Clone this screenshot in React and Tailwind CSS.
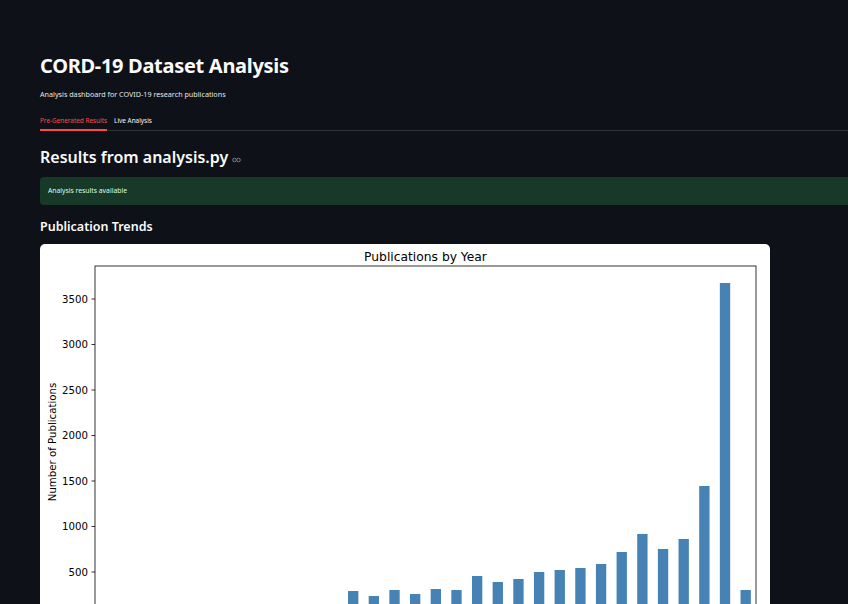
import React from 'react';

// yearly counts, index 0..31 (first 12 are tiny and fall below the fold)
const counts = [
  4, 2, 6, 3, 8, 5, 10, 12, 15, 20, 40, 60,
  291, 236, 302, 258, 313, 302, 456, 390, 423, 500, 522, 544,
  588, 720, 918, 753, 863, 1445, 3676, 302,
];

const AX_L = 55;
const AX_R = 716;
const AX_T = 22;
const ZERO = 373.5;
const PX = 0.091;

function Chart() {
  const step = (AX_R - AX_L) / counts.length;
  const ticks = [500, 1000, 1500, 2000, 2500, 3000, 3500];
  return (
    <svg width="730" height="400" viewBox="0 0 730 400" className="block">
      <rect x="0" y="0" width="730" height="400" fill="#ffffff" />
      <text x="385.5" y="17" textAnchor="middle" fontSize="12.3" fill="#000" fontFamily="'DejaVu Sans', sans-serif">
        Publications by Year
      </text>
      {counts.map((c, i) => {
        const cx = AX_L + (i + 0.5) * step;
        const h = c * PX;
        return <rect key={i} x={cx - step / 4} y={ZERO - h} width={step / 2} height={h} fill="#4682b4" />;
      })}
      <rect x={AX_L} y={AX_T} width={AX_R - AX_L} height={ZERO - AX_T} fill="none" stroke="#000" strokeWidth="0.8" />
      {ticks.map((t) => {
        const y = ZERO - t * PX;
        return (
          <g key={t}>
            <line x1={AX_L - 3.5} y1={y} x2={AX_L} y2={y} stroke="#000" strokeWidth="0.8" />
            <text x={AX_L - 7} y={y + 3.6} textAnchor="end" fontSize="10.2" fill="#000" fontFamily="'DejaVu Sans', sans-serif">
              {t}
            </text>
          </g>
        );
      })}
      <text
        x="0"
        y="0"
        transform="translate(16 198) rotate(-90)"
        textAnchor="middle"
        fontSize="10.2"
        fill="#000"
        fontFamily="'DejaVu Sans', sans-serif"
      >
        Number of Publications
      </text>
    </svg>
  );
}

export default function App() {
  return (
    <div className="w-[848px] h-[604px] overflow-hidden bg-[#0e1117] text-[#fafafa] font-['Noto_Sans',sans-serif]">
      <div className="w-[900px] pl-[40px] pt-[52px]">
        <h1 className="text-[20px] leading-[28px] font-bold tracking-[-0.3px]">CORD-19 Dataset Analysis</h1>
        <p className="mt-[8px] text-[7.2px] leading-[12px] text-[#e6e6e6]">
          Analysis dashboard for COVID-19 research publications
        </p>

        <div className="mt-[13px] flex gap-[7px] border-b border-[#2e3038] text-[6.4px] leading-[10px]">
          <div className="pt-[3px] pb-[3px] border-b-2 border-[#ff4b4b] text-[#ff4b4b] -mb-px">Pre-Generated Results</div>
          <div className="pt-[3px] pb-[3px]">Live Analysis</div>
        </div>

        <div className="mt-[15px] flex items-end gap-[4px]">
          <h2 className="text-[16px] leading-[22px] font-semibold">Results from analysis.py</h2>
          <svg width="9" height="6" viewBox="0 0 9 6" className="mb-[5px]">
            <circle cx="2.5" cy="3" r="1.8" fill="none" stroke="#7d7f86" strokeWidth="1" />
            <circle cx="6.5" cy="3" r="1.8" fill="none" stroke="#7d7f86" strokeWidth="1" />
          </svg>
        </div>

        <div className="mt-[9px] h-[28px] flex items-center px-[8px] rounded-[4px] bg-[#173928] text-[#dffde9] text-[6.8px]">
          Analysis results available
        </div>

        <h3 className="mt-[13px] text-[12.5px] leading-[18px] font-semibold">Publication Trends</h3>

        <div className="mt-[8px] w-[730px] rounded-t-[5px] overflow-hidden">
          <Chart />
        </div>
      </div>
    </div>
  );
}
